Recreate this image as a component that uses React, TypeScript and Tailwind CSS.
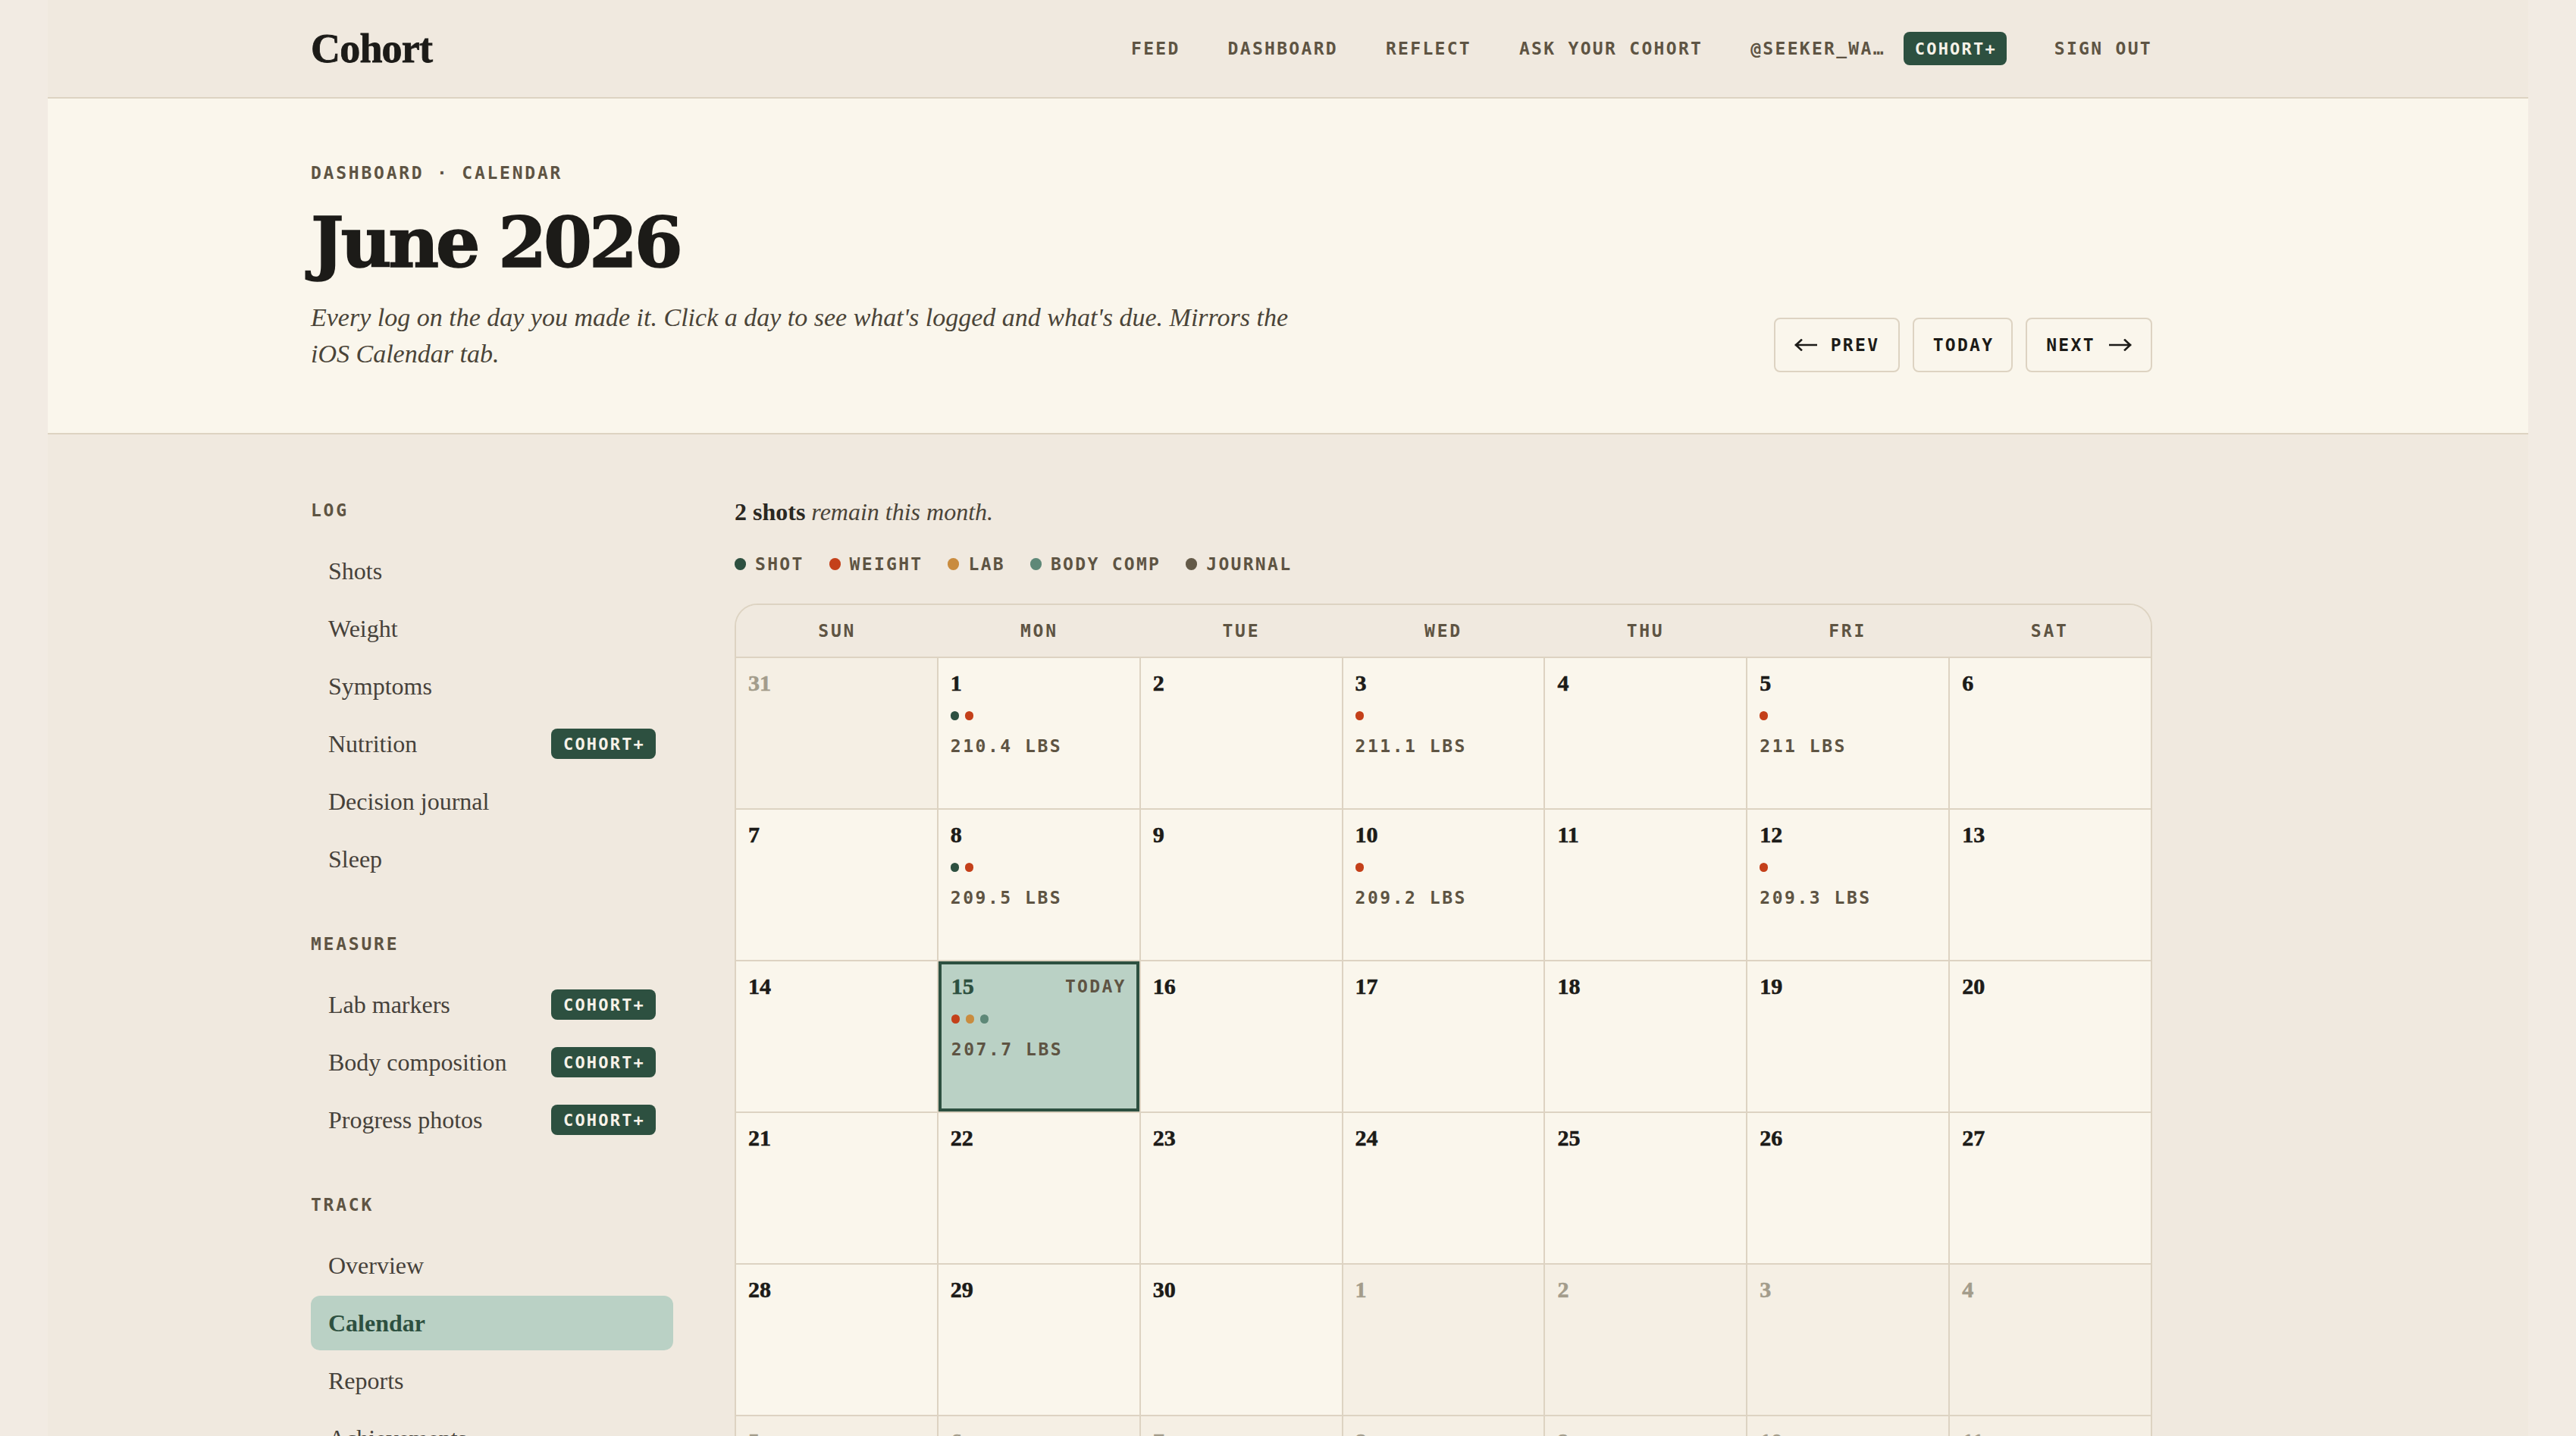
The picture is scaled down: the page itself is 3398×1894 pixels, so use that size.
import React from "react";

type Kind = "shot" | "weight" | "lab" | "body" | "journal";

const DOT: Record<Kind, string> = {
  shot: "bg-[#2d5040]",
  weight: "bg-[#c4401a]",
  lab: "bg-[#c98c3f]",
  body: "bg-[#5e8878]",
  journal: "bg-[#645a48]",
};

const SERIF = "font-['Liberation_Serif',serif]";
const DISPLAY = "font-['DejaVu_Serif',serif]";
const MONO = "font-['DejaVu_Sans_Mono',monospace]";

type Day = { n: number; out?: boolean; dots?: Kind[]; lbs?: string; today?: boolean };

const weeks: Day[][] = [
  [
    { n: 31, out: true },
    { n: 1, dots: ["shot", "weight"], lbs: "210.4 LBS" },
    { n: 2 },
    { n: 3, dots: ["weight"], lbs: "211.1 LBS" },
    { n: 4 },
    { n: 5, dots: ["weight"], lbs: "211 LBS" },
    { n: 6 },
  ],
  [
    { n: 7 },
    { n: 8, dots: ["shot", "weight"], lbs: "209.5 LBS" },
    { n: 9 },
    { n: 10, dots: ["weight"], lbs: "209.2 LBS" },
    { n: 11 },
    { n: 12, dots: ["weight"], lbs: "209.3 LBS" },
    { n: 13 },
  ],
  [
    { n: 14 },
    { n: 15, dots: ["weight", "lab", "body"], lbs: "207.7 LBS", today: true },
    { n: 16 },
    { n: 17 },
    { n: 18 },
    { n: 19 },
    { n: 20 },
  ],
  [21, 22, 23, 24, 25, 26, 27].map((n) => ({ n })),
  [
    { n: 28 },
    { n: 29 },
    { n: 30 },
    { n: 1, out: true },
    { n: 2, out: true },
    { n: 3, out: true },
    { n: 4, out: true },
  ],
  [5, 6, 7, 8, 9, 10, 11].map((n) => ({ n, out: true })),
];

const legend: { kind: Kind; label: string }[] = [
  { kind: "shot", label: "SHOT" },
  { kind: "weight", label: "WEIGHT" },
  { kind: "lab", label: "LAB" },
  { kind: "body", label: "BODY COMP" },
  { kind: "journal", label: "JOURNAL" },
];

type NavItem = { label: string; plus?: boolean; active?: boolean };
const sections: { title: string; items: NavItem[] }[] = [
  {
    title: "LOG",
    items: [
      { label: "Shots" },
      { label: "Weight" },
      { label: "Symptoms" },
      { label: "Nutrition", plus: true },
      { label: "Decision journal" },
      { label: "Sleep" },
    ],
  },
  {
    title: "MEASURE",
    items: [
      { label: "Lab markers", plus: true },
      { label: "Body composition", plus: true },
      { label: "Progress photos", plus: true },
    ],
  },
  {
    title: "TRACK",
    items: [
      { label: "Overview" },
      { label: "Calendar", active: true },
      { label: "Reports" },
      { label: "Achievements" },
    ],
  },
];

function PlusBadge({ size = "sm" }: { size?: "sm" | "nav" }) {
  return (
    <span
      className={`${MONO} inline-flex items-center justify-center rounded-[8px] bg-[#2d5040] text-[#f7f2e8] font-bold text-[22px] tracking-[0.1em] ${
        size === "nav" ? "h-[44px] w-[136px]" : "h-[40px] w-[138px]"
      }`}
    >
      <span className="pl-[2px]">COHORT+</span>
    </span>
  );
}

function Arrow({ dir }: { dir: "left" | "right" }) {
  return (
    <svg width="30" height="16" viewBox="0 0 30 16" fill="none" className="shrink-0">
      {dir === "left" ? (
        <path d="M29 8H2M9 1.5L2 8l7 6.5" stroke="#1c1b18" strokeWidth="2.6" strokeLinecap="square" />
      ) : (
        <path d="M1 8h27M21 1.5L28 8l-7 6.5" stroke="#1c1b18" strokeWidth="2.6" strokeLinecap="square" />
      )}
    </svg>
  );
}

function Header() {
  return (
    <header className="h-[130px] border-b-2 border-[#ddd3c2]">
      <div className="ml-[347px] w-[2429px] h-full flex items-center justify-between">
        <div
          className={`${SERIF} text-[54px] font-bold tracking-[-0.015em] text-[#1c1b18] leading-none [-webkit-text-stroke:0.8px_#1c1b18]`}
        >
          Cohort
        </div>
        <nav className={`${MONO} flex items-center gap-[63px] text-[23px] font-bold tracking-[0.1em] text-[#5e5443]`}>
          <span>FEED</span>
          <span>DASHBOARD</span>
          <span>REFLECT</span>
          <span>ASK YOUR COHORT</span>
          <span className="flex items-center gap-[24px]">
            <span>@SEEKER_WA…</span>
            <PlusBadge size="nav" />
          </span>
          <span>SIGN OUT</span>
        </nav>
      </div>
    </header>
  );
}

function Hero() {
  return (
    <section className="bg-[#faf6ec] border-b-2 border-[#ddd3c2]">
      <div className="ml-[347px] w-[2429px] pt-[84px] pb-[80px] flex items-end justify-between">
        <div>
          <div className={`${MONO} text-[23px] font-bold tracking-[0.12em] text-[#5e5443] leading-[28px]`}>
            DASHBOARD · CALENDAR
          </div>
          <h1
            className={`${DISPLAY} mt-[28px] text-[92px] font-bold tracking-[-0.045em] leading-[100px] text-[#1c1b18] [-webkit-text-stroke:1.5px_#1c1b18]`}
          >
            June 2026
          </h1>
          <p className={`${SERIF} mt-[25px] max-w-[1310px] text-[34px] italic leading-[48px] text-[#4a4438]`}>
            Every log on the day you made it. Click a day to see what's logged and what's due. Mirrors the iOS Calendar
            tab.
          </p>
        </div>
        <div className={`${MONO} flex gap-[17px] text-[23px] font-bold tracking-[0.1em] text-[#1c1b18]`}>
          <button className="h-[72px] w-[166px] rounded-[8px] border-2 border-[#ddd3c2] flex items-center justify-center gap-[18px]">
            <Arrow dir="left" />
            <span>PREV</span>
          </button>
          <button className="h-[72px] w-[132px] rounded-[8px] border-2 border-[#ddd3c2] flex items-center justify-center">
            <span className="pl-[2px]">TODAY</span>
          </button>
          <button className="h-[72px] w-[167px] rounded-[8px] border-2 border-[#ddd3c2] flex items-center justify-center gap-[18px]">
            <span>NEXT</span>
            <Arrow dir="right" />
          </button>
        </div>
      </div>
    </section>
  );
}

function Sidebar() {
  return (
    <aside className="w-[478px] shrink-0 pt-[2px] flex flex-col gap-[62px]">
      {sections.map((s) => (
        <div key={s.title}>
          <div className={`${MONO} text-[23px] font-bold tracking-[0.12em] text-[#5e5443] leading-[28px] mb-[30px]`}>
            {s.title}
          </div>
          <ul className="flex flex-col gap-[4px]">
            {s.items.map((it) => (
              <li
                key={it.label}
                className={`${SERIF} h-[72px] px-[23px] rounded-[12px] flex items-center justify-between text-[32px] ${
                  it.active ? "bg-[#bad1c5] font-bold text-[#2d5040]" : "text-[#46413a]"
                }`}
              >
                <span>{it.label}</span>
                {it.plus && <PlusBadge />}
              </li>
            ))}
          </ul>
        </div>
      ))}
    </aside>
  );
}

function Cell({ d }: { d: Day }) {
  const bg = d.today
    ? "bg-[#bad1c5] border-4 border-[#2d5040] pt-[13px] px-[13px]"
    : d.out
      ? "bg-[#f5efe4] pt-[17px] px-[16px]"
      : "bg-[#faf6ec] pt-[17px] px-[16px]";
  const num = d.today
    ? "text-[#2d5040] [-webkit-text-stroke:0.6px_#2d5040]"
    : d.out
      ? "text-[#a39c8b] [-webkit-text-stroke:0.6px_#a39c8b]"
      : "text-[#1c1b18] [-webkit-text-stroke:0.6px_#1c1b18]";
  return (
    <div className={`h-[198px] flex flex-col ${bg}`}>
      <div className="flex items-center justify-between h-[32px]">
        <span className={`${SERIF} text-[30px] font-bold leading-[32px] ${num}`}>{d.n}</span>
        {d.today && (
          <span className={`${MONO} text-[23px] font-bold tracking-[0.1em] text-[#5e5443]`}>TODAY</span>
        )}
      </div>
      {d.dots && (
        <div className="mt-[21px] flex gap-[8px]">
          {d.dots.map((k) => (
            <span key={k} className={`w-[11px] h-[12px] rounded-full ${DOT[k]}`} />
          ))}
        </div>
      )}
      {d.lbs && (
        <div className={`${MONO} mt-[20px] text-[23px] font-bold tracking-[0.11em] leading-[28px] text-[#5e5443]`}>
          {d.lbs}
        </div>
      )}
    </div>
  );
}

function Calendar() {
  return (
    <div className="rounded-[30px] border-2 border-[#ddd3c2] overflow-hidden">
      <div className="grid grid-cols-7 h-[70px] border-b-2 border-[#ddd3c2] bg-[#f0e9df]">
        {["SUN", "MON", "TUE", "WED", "THU", "FRI", "SAT"].map((w) => (
          <div
            key={w}
            className={`${MONO} flex items-center justify-center text-[23px] font-bold tracking-[0.12em] text-[#5e5443]`}
          >
            {w}
          </div>
        ))}
      </div>
      <div className="grid grid-cols-7 gap-[2px] bg-[#ddd3c2]">
        {weeks.flat().map((d, i) => (
          <Cell key={i} d={d} />
        ))}
      </div>
    </div>
  );
}

function Main() {
  return (
    <main className="w-[1870px]">
      <p className={`${SERIF} text-[32px] leading-[36px] text-[#4a4438]`}>
        <span className="font-bold text-[#2b2822]">2 shots</span> <span className="italic">remain this month.</span>
      </p>
      <div
        className={`${MONO} mt-[37px] flex items-center gap-[33px] text-[23px] font-bold tracking-[0.1em] text-[#5e5443] leading-[28px]`}
      >
        {legend.map((l) => (
          <span key={l.kind} className="flex items-center gap-[12px]">
            <span className={`w-[15px] h-[16px] rounded-full ${DOT[l.kind]}`} />
            <span>{l.label}</span>
          </span>
        ))}
      </div>
      <div className="mt-[38px]">
        <Calendar />
      </div>
    </main>
  );
}

export default function App() {
  return (
    <div className="min-h-screen bg-[#f2ebe3] px-[63px]">
      <div className="bg-[#f0e9df] min-h-screen">
        <Header />
        <Hero />
        <div className="ml-[347px] w-[2429px] pt-[84px] pb-[80px] flex gap-[81px]">
          <Sidebar />
          <Main />
        </div>
      </div>
    </div>
  );
}
